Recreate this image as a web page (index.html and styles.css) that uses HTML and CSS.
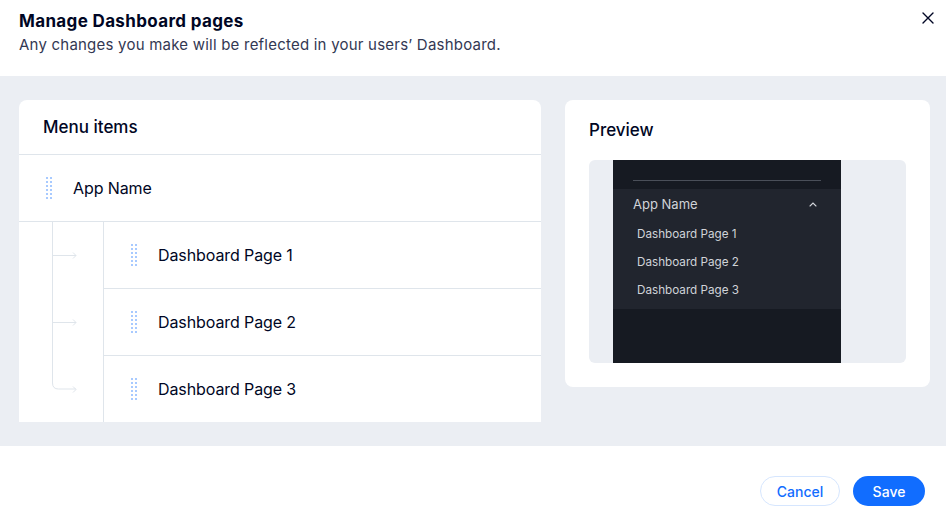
FILE: index.html
```html
<!DOCTYPE html>
<html lang="en">
<head>
    <meta charset="UTF-8">
    <meta name="viewport" content="width=device-width, initial-scale=1.0">
    <title>Manage Dashboard pages</title>
    <link rel="stylesheet" href="styles.css">
</head>
<body>
    <div class="modal">
        <div class="header">
            <div>
                <h1>Manage Dashboard pages</h1>
                <p class="subtitle">Any changes you make will be reflected in your users’ Dashboard.</p>
            </div>
            <button class="close-btn" aria-label="Close">
                <svg width="12" height="12" viewBox="0 0 12 12"><path d="M1 1L11 11M11 1L1 11" stroke="#000624" stroke-width="1.4" stroke-linecap="round"/></svg>
            </button>
        </div>

        <div class="content">
            <div class="card menu-card">
                <h2 class="card-title">Menu items</h2>
                <div class="row parent-row">
                    <span class="handle"></span>
                    <span class="row-label">App Name</span>
                </div>
                <div class="children">
                    <div class="tree">
                        <svg width="84" height="201" viewBox="0 0 84 201" fill="none" stroke="#dfe5eb" stroke-width="1">
                            <path d="M33.5 0V161Q33.5 167 39.5 167H57"/>
                            <path d="M33.5 33.5H57M54 30.5L57 33.5L54 36.5"/>
                            <path d="M33.5 100.5H57M54 97.5L57 100.5L54 103.5"/>
                            <path d="M54 164.5L57 167.5L54 170.5"/>
                        </svg>
                    </div>
                    <div class="child-rows">
                        <div class="row child-row">
                            <span class="handle"></span>
                            <span class="row-label">Dashboard Page 1</span>
                        </div>
                        <div class="row child-row">
                            <span class="handle"></span>
                            <span class="row-label">Dashboard Page 2</span>
                        </div>
                        <div class="row child-row">
                            <span class="handle"></span>
                            <span class="row-label">Dashboard Page 3</span>
                        </div>
                    </div>
                </div>
            </div>

            <div class="card preview-card">
                <h2 class="card-title">Preview</h2>
                <div class="preview-box">
                    <div class="sidebar">
                        <div class="sidebar-top"><div class="sidebar-line"></div></div>
                        <div class="sidebar-section">
                            <div class="section-head">
                                <span>App Name</span>
                                <svg width="8" height="5" viewBox="0 0 8 5"><path d="M1 4L4 1L7 4" stroke="#d0d3d8" stroke-width="1.1" fill="none" stroke-linecap="round"/></svg>
                            </div>
                            <div class="section-item">Dashboard Page 1</div>
                            <div class="section-item">Dashboard Page 2</div>
                            <div class="section-item">Dashboard Page 3</div>
                        </div>
                    </div>
                </div>
            </div>
        </div>

        <div class="footer">
            <button class="cancel-btn">Cancel</button>
            <button class="save-btn">Save</button>
        </div>
    </div>
</body>
</html>
```

FILE: styles.css
```css
body {
    margin: 0;
    font-family: Inter, "Noto Sans", sans-serif;
    color: #000624;
    background-color: #fff;
}
.modal {
    width: 946px;
    height: 526px;
    display: flex;
    flex-direction: column;
}
.header {
    height: 76px;
    box-sizing: border-box;
    padding: 10px 12px 0 19px;
    display: flex;
    justify-content: space-between;
    align-items: flex-start;
}
h1 {
    font-size: 17px;
    font-weight: 700;
    margin: 0;
    line-height: 22px;
    letter-spacing: 0.35px;
}
.subtitle {
    margin: 2px 0 0 0;
    font-size: 15px;
    line-height: 22px;
    color: #333853;
    letter-spacing: 0.22px;
}
.close-btn {
    background: none;
    border: none;
    padding: 0;
    margin-top: 2px;
    width: 12px;
    height: 12px;
    cursor: pointer;
}
.content {
    height: 370px;
    box-sizing: border-box;
    background-color: #ebeef3;
    padding: 24px 16px 0 19px;
    display: flex;
    align-items: flex-start;
    gap: 24px;
}
.card {
    background-color: #fff;
    border-radius: 8px;
}
.menu-card {
    width: 522px;
    height: 322px;
    border-radius: 8px 8px 0 0;
    overflow: hidden;
}
.card-title {
    margin: 0;
    font-size: 17px;
    font-weight: 500;
    line-height: 22px;
}
.menu-card .card-title {
    padding: 16px 24px 16px 24px;
    border-bottom: 1px solid #dfe5eb;
}
.row {
    display: flex;
    align-items: center;
    height: 66px;
}
.parent-row {
    padding-left: 27px;
    border-bottom: 1px solid #dfe5eb;
}
.handle {
    width: 6px;
    height: 22px;
    background-image: radial-gradient(circle, #a8caff 1.2px, transparent 1.4px);
    background-size: 4px 4px;
    background-position: -1px -1px;
    margin-right: 21px;
}
.row-label {
    font-size: 16px;
    line-height: 22px;
    letter-spacing: -0.1px;
}
.children {
    display: flex;
}
.tree {
    width: 84px;
    flex-shrink: 0;
}
.tree svg {
    display: block;
}
.child-rows {
    flex: 1;
    border-left: 1px solid #dfe5eb;
    height: 201px;
}
.child-row {
    padding-left: 27px;
    height: 66px;
}
.child-row + .child-row {
    border-top: 1px solid #dfe5eb;
}
.preview-card {
    width: 365px;
    height: 287px;
    box-sizing: border-box;
    padding: 19px 24px 24px 24px;
}
.preview-card .card-title {
    margin-bottom: 19px;
}
.preview-box {
    background-color: #ebeef3;
    border-radius: 6px;
    height: 203px;
    padding-left: 24px;
    overflow: hidden;
}
.sidebar {
    width: 228px;
    height: 100%;
    background-color: #161a22;
}
.sidebar-top {
    height: 29px;
    padding: 20px 20px 0 20px;
    box-sizing: border-box;
}
.sidebar-line {
    height: 1px;
    background-color: #4a4f59;
}
.sidebar-section {
    background-color: #21252e;
    padding: 6px 0 5px 0;
}
.section-head {
    display: flex;
    justify-content: space-between;
    align-items: center;
    padding: 0 24px 0 20px;
    font-size: 13px;
    line-height: 18px;
    color: #d0d3d8;
    margin-bottom: 7px;
}
.section-item {
    padding-left: 24px;
    font-size: 11.7px;
    line-height: 28px;
    color: #d0d3d8;
}
.footer {
    flex: 1;
    display: flex;
    justify-content: flex-end;
    align-items: flex-start;
    gap: 13px;
    padding: 30px 21px 0 0;
}
.cancel-btn, .save-btn {
    height: 30px;
    border-radius: 15px;
    font-family: inherit;
    font-size: 14px;
    font-weight: 500;
    cursor: pointer;
}
.cancel-btn {
    background-color: #fff;
    border: 1px solid #d6e6fe;
    color: #116dff;
    width: 80px;
}
.save-btn {
    background-color: #116dff;
    border: none;
    color: #fff;
    width: 72px;
}
```
